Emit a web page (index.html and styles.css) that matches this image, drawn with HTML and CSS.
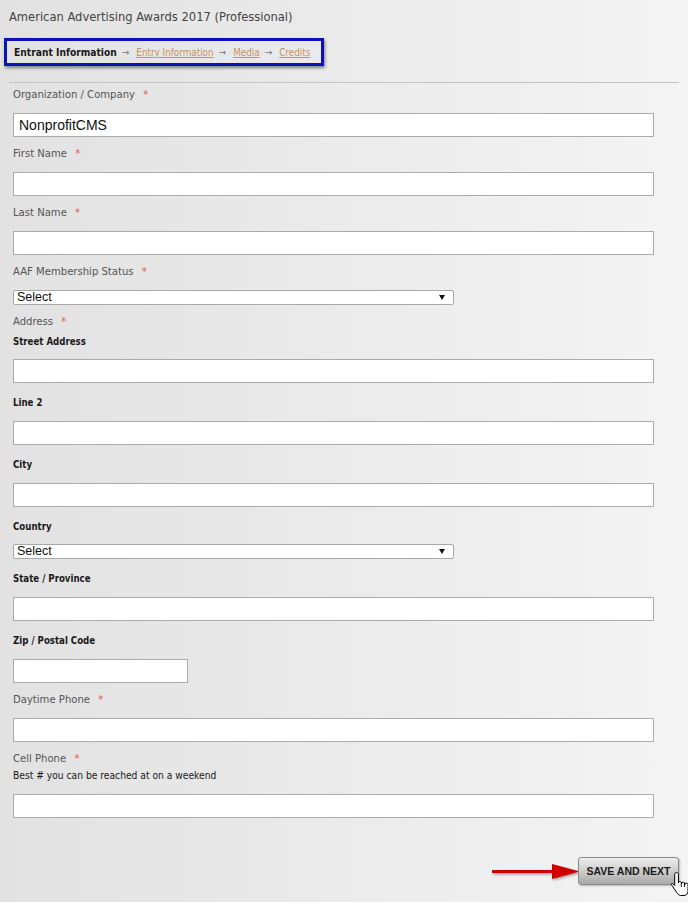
FILE: index.html
```html
<!DOCTYPE html>
<html>
<head>
<meta charset="utf-8">
<link rel="stylesheet" href="styles.css">
</head>
<body>
<div class="page">
  <h1 class="title">American Advertising Awards 2017 (Professional)</h1>
  <nav class="steps">
    <span class="step current">Entrant Information</span>
    <span class="sep">&rarr;</span>
    <a class="step link" href="#">Entry Information</a>
    <span class="sep">&rarr;</span>
    <a class="step link" href="#">Media</a>
    <span class="sep">&rarr;</span>
    <a class="step link" href="#">Credits</a>
  </nav>
  <hr class="rule">
  <form class="form">
    <div class="group">
      <label class="label">Organization / Company <span class="req">*</span></label>
      <input class="input" type="text" value="NonprofitCMS">
    </div>
    <div class="group">
      <label class="label">First Name <span class="req">*</span></label>
      <input class="input" type="text">
    </div>
    <div class="group">
      <label class="label">Last Name <span class="req">*</span></label>
      <input class="input" type="text">
    </div>
    <div class="group">
      <label class="label">AAF Membership Status <span class="req">*</span></label>
      <div class="select-wrap">
        <select class="select"><option>Select</option></select>
        <span class="caret"></span>
      </div>
    </div>
    <div class="group address">
      <label class="label">Address <span class="req">*</span></label>
      <div class="sub">
        <label class="sublabel">Street Address</label>
        <input class="input" type="text">
      </div>
      <div class="sub">
        <label class="sublabel">Line 2</label>
        <input class="input" type="text">
      </div>
      <div class="sub">
        <label class="sublabel">City</label>
        <input class="input" type="text">
      </div>
      <div class="sub">
        <label class="sublabel tight">Country</label>
        <div class="select-wrap">
          <select class="select"><option>Select</option></select>
          <span class="caret"></span>
        </div>
      </div>
      <div class="sub">
        <label class="sublabel">State / Province</label>
        <input class="input" type="text">
      </div>
      <div class="sub">
        <label class="sublabel">Zip / Postal Code</label>
        <input class="input short" type="text">
      </div>
    </div>
    <div class="group">
      <label class="label">Daytime Phone <span class="req">*</span></label>
      <input class="input" type="text">
    </div>
    <div class="group">
      <label class="label">Cell Phone <span class="req">*</span></label>
      <div class="hint">Best # you can be reached at on a weekend</div>
      <input class="input" type="text">
    </div>
    <div class="actions">
      <svg class="arrow" width="92" height="20" viewBox="0 0 92 20">
        <defs>
          <filter id="sh" x="-10%" y="-40%" width="130%" height="200%">
            <feDropShadow dx="1" dy="1.5" stdDeviation="1" flood-color="#000" flood-opacity="0.35"/>
          </filter>
        </defs>
        <g filter="url(#sh)">
          <rect x="2" y="8" width="66" height="3" fill="#cc0000"/>
          <polygon points="62,2 90,9.5 62,17" fill="#cc0000"/>
        </g>
      </svg>
      <div class="btn-wrap">
        <button class="btn" type="button">SAVE AND NEXT</button>
        <svg class="cursor" width="18" height="26" viewBox="0 0 18 26">
          <path d="M5.5 1.5c-1 0-1.8.8-1.8 1.8v11.2l-1.2-1.4c-.7-.8-1.9-.9-2-.1 0 .5.1.9.5 1.4l3.7 5.6c1 1.5 2.4 4 4.8 4.5h3.5c2.3 0 4-1.9 4-4.3v-6.5c0-.9-.7-1.6-1.6-1.6s-1.6.7-1.6 1.6v-.9c0-.9-.7-1.6-1.6-1.6s-1.6.7-1.6 1.6v-.7c0-.9-.7-1.6-1.6-1.6s-1.6.7-1.6 1.6V3.3c0-1-.8-1.8-1.8-1.8z" fill="#fff" stroke="#000" stroke-width="1"/>
          <path d="M10.3 11v5M13.5 11.8v4.2" stroke="#000" stroke-width="0.9"/>
        </svg>
      </div>
    </div>
  </form>
</div>
</body>
</html>
```

FILE: styles.css
```css
html, body {
  margin: 0;
  padding: 0;
}
body {
  background: linear-gradient(to right, #e2e2e2 0%, #ebebeb 50%, #f4f4f4 100%);
  min-height: 902px;
  font-family: "DejaVu Sans Condensed", "DejaVu Sans", Verdana, sans-serif;
  font-stretch: condensed;
  color: #555;
}
.page {
  padding: 8px 9px 0 4px;
}
.title {
  margin: 0 0 0 5px;
  font-size: 12.8px;
  font-weight: normal;
  line-height: 18px;
  color: #444;
}
.steps {
  display: inline-flex;
  align-items: center;
  margin-top: 12px;
  height: 22px;
  padding: 0 11px 0 7px;
  border: 3px solid #0a13b8;
  box-shadow: 1px 2px 3px rgba(0,0,0,0.45);
  font-size: 10px;
  white-space: nowrap;
}
.step.current {
  font-weight: bold;
  color: #1a1a1a;
  font-size: 10.2px;
}
.sep {
  color: #777;
  margin: 0 7px 0 5px;
  font-size: 10px;
}
.step.link {
  color: #c8935e;
  text-decoration: underline;
  font-size: 9.8px;
}
.rule {
  margin: 16px 0 0 5px;
  border: 0;
  border-top: 1px solid #c4c4c4;
  height: 0;
}
.form {
  padding-left: 9px;
  padding-top: 4px;
}
.group {
  display: flex;
  flex-direction: column;
  align-items: flex-start;
  padding-bottom: 9px;
}
.label {
  font-size: 11.2px;
  line-height: 16px;
  color: #555;
  margin-bottom: 10px;
}
.req {
  color: #e8553e;
  margin-left: 5px;
}
.input {
  box-sizing: border-box;
  width: 641px;
  height: 24px;
  margin: 0;
  border: 1px solid #ababab;
  background: #fff;
  padding: 0 5px;
  font-family: "Liberation Sans", Arial, sans-serif;
  font-stretch: normal;
  font-size: 14px;
  color: #111;
}
.input.short {
  width: 175px;
}
.select-wrap {
  position: relative;
  width: 441px;
  height: 15px;
}
.select {
  display: block;
  -webkit-appearance: none;
  appearance: none;
  box-sizing: border-box;
  width: 441px;
  height: 15px;
  margin: 0;
  border: 1px solid #a8a8a8;
  border-radius: 2px;
  background: #fff;
  padding: 0 0 0 3px;
  font-family: "Liberation Sans", Arial, sans-serif;
  font-stretch: normal;
  font-size: 12.5px;
  line-height: 13px;
  color: #111;
}
.caret {
  position: absolute;
  right: 9px;
  top: 5px;
  width: 0;
  height: 0;
  border-left: 3px solid transparent;
  border-right: 3px solid transparent;
  border-top: 5px solid #111;
  pointer-events: none;
}
.address {
  padding-bottom: 0;
}
.address > .label {
  margin-bottom: 4px;
}
.sub {
  display: flex;
  flex-direction: column;
  align-items: flex-start;
  padding-bottom: 12px;
}
.sub:last-child {
  padding-bottom: 9px;
}
.sublabel {
  font-size: 9.6px;
  font-weight: bold;
  line-height: 16px;
  color: #1a1a1a;
  margin-bottom: 9px;
}
.sub + .sub .sublabel {
  margin-bottom: 10px;
}
.sub + .sub .sublabel.tight {
  margin-bottom: 9px;
}
.hint {
  font-size: 10.2px;
  line-height: 16px;
  color: #1a1a1a;
  margin-top: -9px;
  margin-bottom: 10px;
}
.actions {
  display: flex;
  justify-content: flex-end;
  align-items: center;
  padding-top: 30px;
  width: 666px;
}
.arrow {
  display: block;
  margin-right: -4px;
  margin-top: 2px;
}
.btn-wrap {
  position: relative;
}
.btn {
  display: block;
  box-sizing: border-box;
  width: 101px;
  height: 28px;
  border: 1px solid #8a8a8a;
  border-radius: 3px;
  background: linear-gradient(to bottom, #ededed 0%, #d0d0d0 45%, #a9a9a9 100%);
  box-shadow: 1px 1px 2px rgba(0,0,0,0.25);
  font-family: "Liberation Sans", Arial, sans-serif;
  font-stretch: normal;
  font-weight: bold;
  font-size: 10.5px;
  color: #1a1a1a;
  padding: 0;
}
.cursor {
  position: absolute;
  left: 93px;
  top: 14px;
}
```
